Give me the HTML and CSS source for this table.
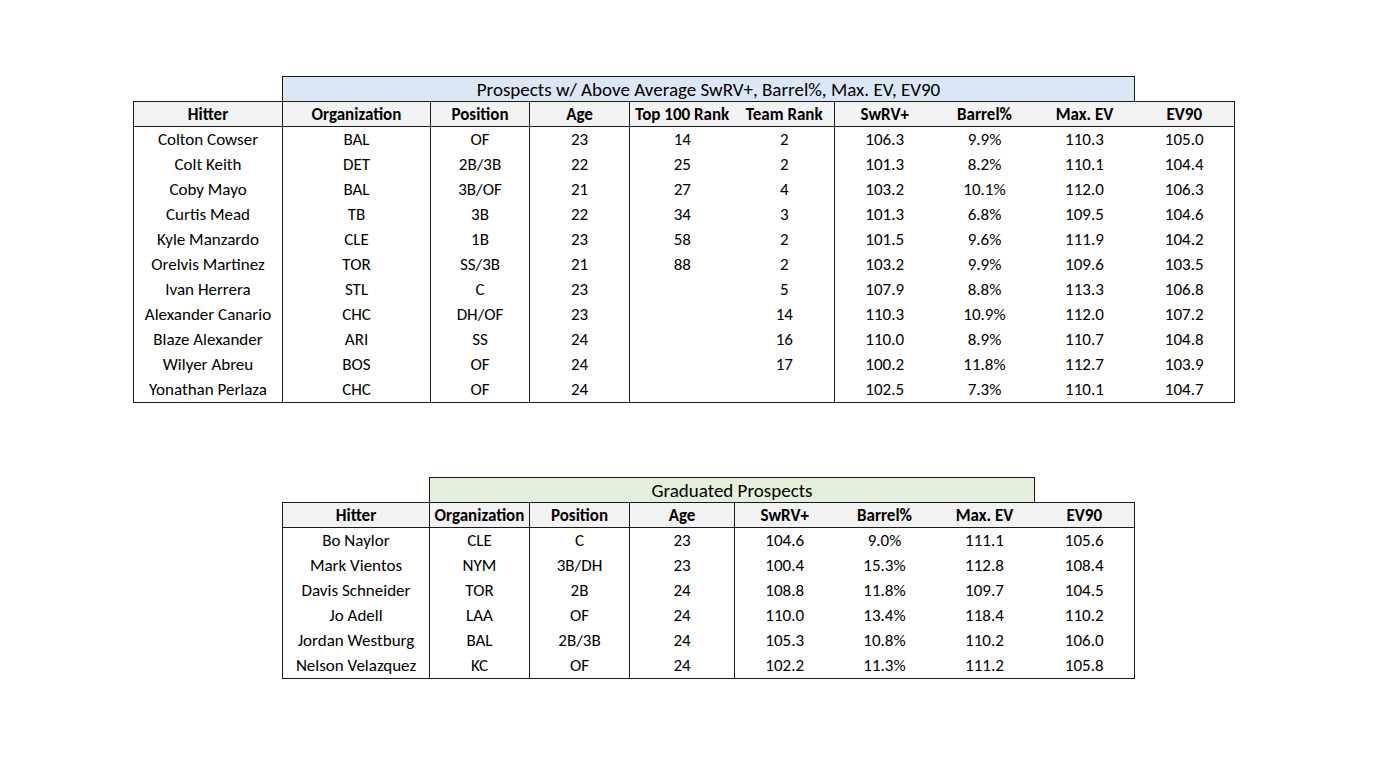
FILE: index.html
```html
<!DOCTYPE html>
<html>
<head>
<meta charset="utf-8">
<link rel="stylesheet" href="styles.css">
</head>
<body>
<div class="page">
  <section class="block block-one">
    <div class="title title-blue">Prospects w/ Above Average SwRV+, Barrel%, Max. EV, EV90</div>
    <table class="grid grid-one">
      <colgroup>
        <col style="width:149px"><col style="width:148px"><col style="width:99px"><col style="width:100px"><col style="width:105px"><col style="width:100px"><col style="width:100px"><col style="width:100px"><col style="width:100px"><col style="width:100px">
      </colgroup>
      <thead>
        <tr><th class="vl">Hitter</th><th class="vl">Organization</th><th class="vl">Position</th><th class="vl">Age</th><th>Top 100 Rank</th><th class="vl">Team Rank</th><th>SwRV+</th><th>Barrel%</th><th>Max. EV</th><th>EV90</th></tr>
      </thead>
      <tbody>
        <tr><td class="vl">Colton Cowser</td><td class="vl">BAL</td><td class="vl">OF</td><td class="vl">23</td><td>14</td><td class="vl">2</td><td>106.3</td><td>9.9%</td><td>110.3</td><td>105.0</td></tr>
        <tr><td class="vl">Colt Keith</td><td class="vl">DET</td><td class="vl">2B/3B</td><td class="vl">22</td><td>25</td><td class="vl">2</td><td>101.3</td><td>8.2%</td><td>110.1</td><td>104.4</td></tr>
        <tr><td class="vl">Coby Mayo</td><td class="vl">BAL</td><td class="vl">3B/OF</td><td class="vl">21</td><td>27</td><td class="vl">4</td><td>103.2</td><td>10.1%</td><td>112.0</td><td>106.3</td></tr>
        <tr><td class="vl">Curtis Mead</td><td class="vl">TB</td><td class="vl">3B</td><td class="vl">22</td><td>34</td><td class="vl">3</td><td>101.3</td><td>6.8%</td><td>109.5</td><td>104.6</td></tr>
        <tr><td class="vl">Kyle Manzardo</td><td class="vl">CLE</td><td class="vl">1B</td><td class="vl">23</td><td>58</td><td class="vl">2</td><td>101.5</td><td>9.6%</td><td>111.9</td><td>104.2</td></tr>
        <tr><td class="vl">Orelvis Martinez</td><td class="vl">TOR</td><td class="vl">SS/3B</td><td class="vl">21</td><td>88</td><td class="vl">2</td><td>103.2</td><td>9.9%</td><td>109.6</td><td>103.5</td></tr>
        <tr><td class="vl">Ivan Herrera</td><td class="vl">STL</td><td class="vl">C</td><td class="vl">23</td><td></td><td class="vl">5</td><td>107.9</td><td>8.8%</td><td>113.3</td><td>106.8</td></tr>
        <tr><td class="vl">Alexander Canario</td><td class="vl">CHC</td><td class="vl">DH/OF</td><td class="vl">23</td><td></td><td class="vl">14</td><td>110.3</td><td>10.9%</td><td>112.0</td><td>107.2</td></tr>
        <tr><td class="vl">Blaze Alexander</td><td class="vl">ARI</td><td class="vl">SS</td><td class="vl">24</td><td></td><td class="vl">16</td><td>110.0</td><td>8.9%</td><td>110.7</td><td>104.8</td></tr>
        <tr><td class="vl">Wilyer Abreu</td><td class="vl">BOS</td><td class="vl">OF</td><td class="vl">24</td><td></td><td class="vl">17</td><td>100.2</td><td>11.8%</td><td>112.7</td><td>103.9</td></tr>
        <tr><td class="vl">Yonathan Perlaza</td><td class="vl">CHC</td><td class="vl">OF</td><td class="vl">24</td><td></td><td class="vl"></td><td>102.5</td><td>7.3%</td><td>110.1</td><td>104.7</td></tr>
      </tbody>
    </table>
  </section>

  <section class="block block-two">
    <div class="title title-green">Graduated Prospects</div>
    <table class="grid grid-two">
      <colgroup>
        <col style="width:147px"><col style="width:100px"><col style="width:100px"><col style="width:105px"><col style="width:100px"><col style="width:100px"><col style="width:100px"><col style="width:100px">
      </colgroup>
      <thead>
        <tr><th class="vl">Hitter</th><th class="vl">Organization</th><th class="vl">Position</th><th class="vl">Age</th><th>SwRV+</th><th>Barrel%</th><th>Max. EV</th><th>EV90</th></tr>
      </thead>
      <tbody>
        <tr><td class="vl">Bo Naylor</td><td class="vl">CLE</td><td class="vl">C</td><td class="vl">23</td><td>104.6</td><td>9.0%</td><td>111.1</td><td>105.6</td></tr>
        <tr><td class="vl">Mark Vientos</td><td class="vl">NYM</td><td class="vl">3B/DH</td><td class="vl">23</td><td>100.4</td><td>15.3%</td><td>112.8</td><td>108.4</td></tr>
        <tr><td class="vl">Davis Schneider</td><td class="vl">TOR</td><td class="vl">2B</td><td class="vl">24</td><td>108.8</td><td>11.8%</td><td>109.7</td><td>104.5</td></tr>
        <tr><td class="vl">Jo Adell</td><td class="vl">LAA</td><td class="vl">OF</td><td class="vl">24</td><td>110.0</td><td>13.4%</td><td>118.4</td><td>110.2</td></tr>
        <tr><td class="vl">Jordan Westburg</td><td class="vl">BAL</td><td class="vl">2B/3B</td><td class="vl">24</td><td>105.3</td><td>10.8%</td><td>110.2</td><td>106.0</td></tr>
        <tr><td class="vl">Nelson Velazquez</td><td class="vl">KC</td><td class="vl">OF</td><td class="vl">24</td><td>102.2</td><td>11.3%</td><td>111.2</td><td>105.8</td></tr>
      </tbody>
    </table>
  </section>
</div>
</body>
</html>
```

FILE: styles.css
```css
html, body {
  margin: 0;
  padding: 0;
  background: #ffffff;
}

body {
  font-family: "Carlito", "Lato", "Open Sans", sans-serif;
  color: #000000;
  font-size: 17px;
}

.page {
  display: flex;
  flex-direction: column;
  padding-top: 76px;
  gap: 74px;
}

.block {
  display: flex;
  flex-direction: column;
}

.block-one {
  margin-left: 133px;
  width: 1101px;
}

.block-two {
  margin-left: 282px;
  width: 852px;
}

.title {
  box-sizing: border-box;
  height: 25px;
  border: 1px solid #1a1a1a;
  border-bottom: none;
  text-align: center;
  font-size: 19px;
  line-height: 25px;
}

.title-blue {
  margin-left: 149px;
  width: 853px;
  background: #dce7f6;
}

.title-green {
  margin-left: 147px;
  width: 606px;
  background: #e3efda;
}

.grid {
  border-collapse: collapse;
  table-layout: fixed;
  border: 1px solid #1a1a1a;
}

.grid-one {
  width: 1102px;
}

.grid-two {
  width: 853px;
}

.grid th,
.grid td {
  padding: 1px 0 0 0;
  text-align: center;
  white-space: nowrap;
  overflow: hidden;
  line-height: 20px;
}

.grid th {
  height: 23px;
  font-weight: bold;
  background: #f2f2f2;
  border-bottom: 1px solid #1a1a1a;
}

.grid td {
  height: 24px;
}

.grid .vl {
  border-right: 1px solid #1a1a1a;
}
```
